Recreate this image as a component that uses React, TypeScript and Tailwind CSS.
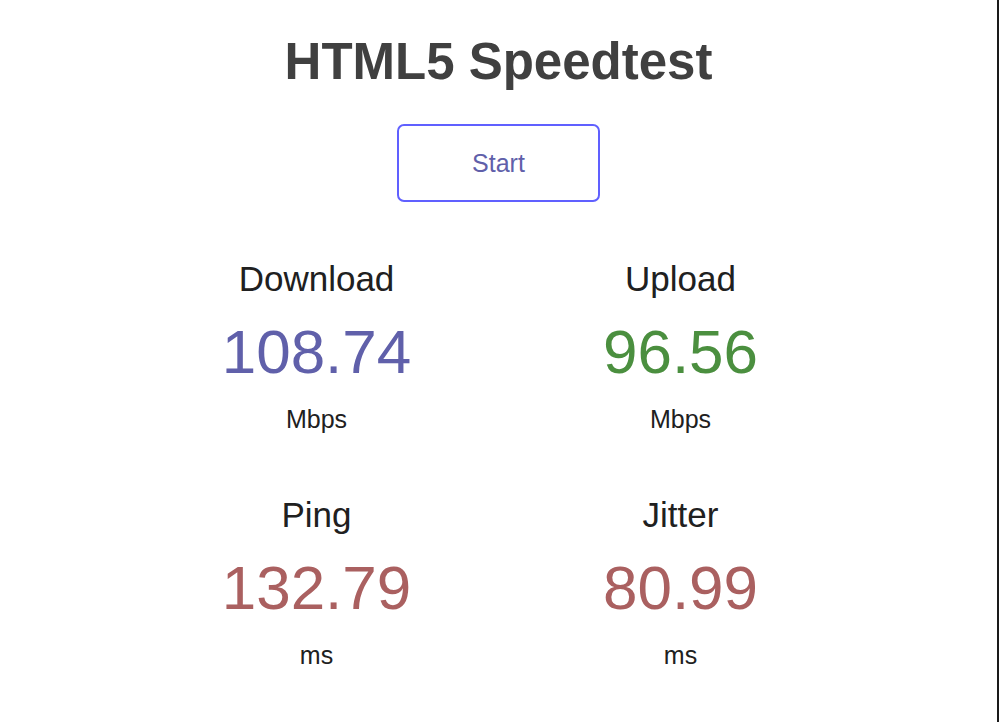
const tests = [
  { name: "Download", value: "108.74", unit: "Mbps", color: "text-[#6060AA]" },
  { name: "Upload", value: "96.56", unit: "Mbps", color: "text-[#4B8F3F]" },
  { name: "Ping", value: "132.79", unit: "ms", color: "text-[#AA6060]" },
  { name: "Jitter", value: "80.99", unit: "ms", color: "text-[#AA6060]" },
];

function TestArea({ name, value, unit, color }: { name: string; value: string; unit: string; color: string }) {
  return (
    <div className="flex flex-col items-center">
      <div className="text-[35px] leading-none text-[#202020]">{name}</div>
      <div className={`mt-[25px] text-[62px] leading-none ${color}`}>{value}</div>
      <div className="mt-[24px] text-[25px] leading-none text-[#202020]">{unit}</div>
    </div>
  );
}

export default function App() {
  return (
    <div className="min-h-[722px] w-[999px] border-r-2 border-[#1a1a1a] bg-white font-['Liberation_Sans',Arial,sans-serif]">
      <div className="flex flex-col items-center">
        <h1 className="mt-[36px] text-[51px] font-bold leading-none text-[#404040]">HTML5 Speedtest</h1>
        <button className="mt-[37px] flex h-[78px] w-[203px] items-center justify-center rounded-[7px] border-2 border-[#6060FF] text-[25px] leading-none text-[#6060AA]">
          Start
        </button>
        <div className="mt-[59px] grid grid-cols-[364px_364px] gap-y-[65px]">
          {tests.map((t) => (
            <TestArea key={t.name} {...t} />
          ))}
        </div>
      </div>
    </div>
  );
}
